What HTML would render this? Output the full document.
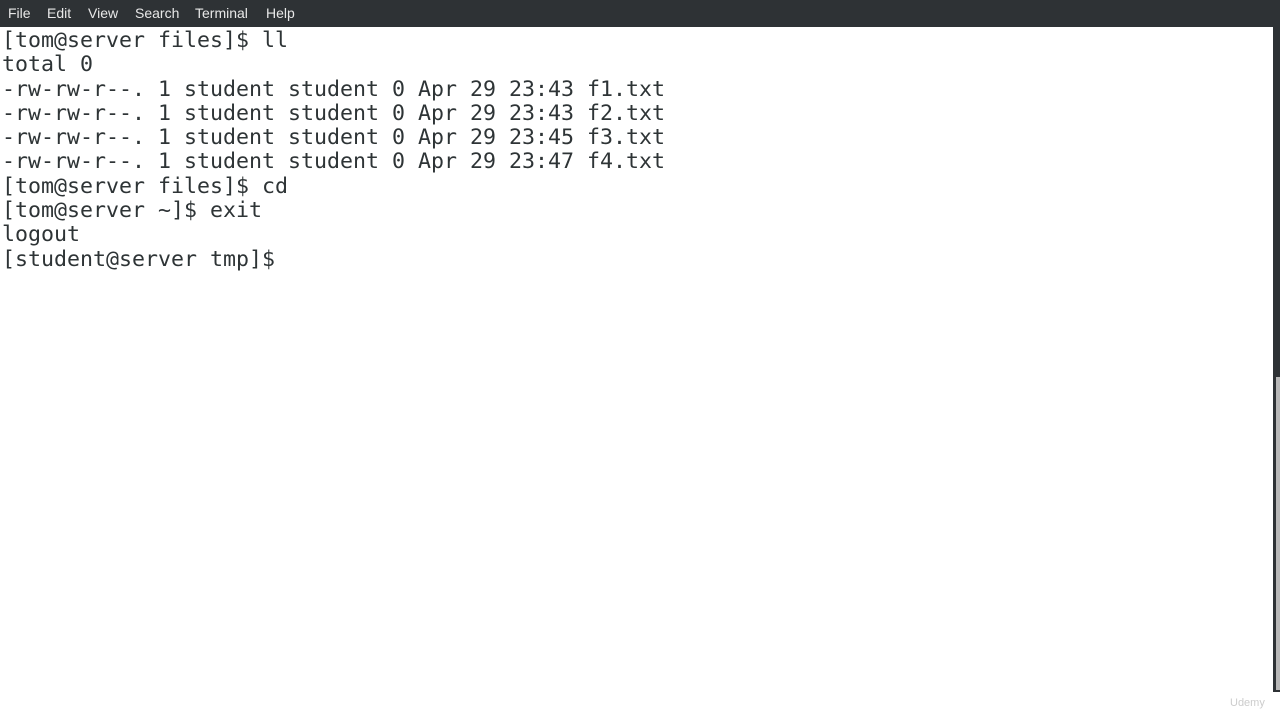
<!DOCTYPE html>
<html><head><style>
html,body{margin:0;padding:0;width:1280px;height:720px;overflow:hidden;background:#fff}
.menu{position:absolute;left:0;top:0;width:1280px;height:27px;background:#2e3235;color:#e8e8e8;font:14px "Liberation Sans",sans-serif}
.menu span{position:absolute;top:5px}
pre{position:absolute;left:2px;top:29px;margin:0;font:21.6px/24.3px "DejaVu Sans Mono","Liberation Mono",monospace;color:#2e3436}
.sb{position:absolute;left:1273px;top:27px;width:7px;height:665px;background:#2e3235}
.th{position:absolute;left:1276px;top:377px;width:4px;height:313px;background:#b8b8b8}
.wm{position:absolute;left:1230px;top:697px;font:11px "Liberation Sans",sans-serif;color:#ccc}
</style></head><body>
<div class="menu"><span style="left:8px">File</span><span style="left:47px">Edit</span><span style="left:88px">View</span><span style="left:135px">Search</span><span style="left:195px">Terminal</span><span style="left:266px">Help</span></div>
<pre>[tom@server files]$ ll
total 0
-rw-rw-r--. 1 student student 0 Apr 29 23:43 f1.txt
-rw-rw-r--. 1 student student 0 Apr 29 23:43 f2.txt
-rw-rw-r--. 1 student student 0 Apr 29 23:45 f3.txt
-rw-rw-r--. 1 student student 0 Apr 29 23:47 f4.txt
[tom@server files]$ cd
[tom@server ~]$ exit
logout
[student@server tmp]$ </pre>
<div class="sb"></div><div class="th"></div>
<div class="wm">Udemy</div>
</body></html>
